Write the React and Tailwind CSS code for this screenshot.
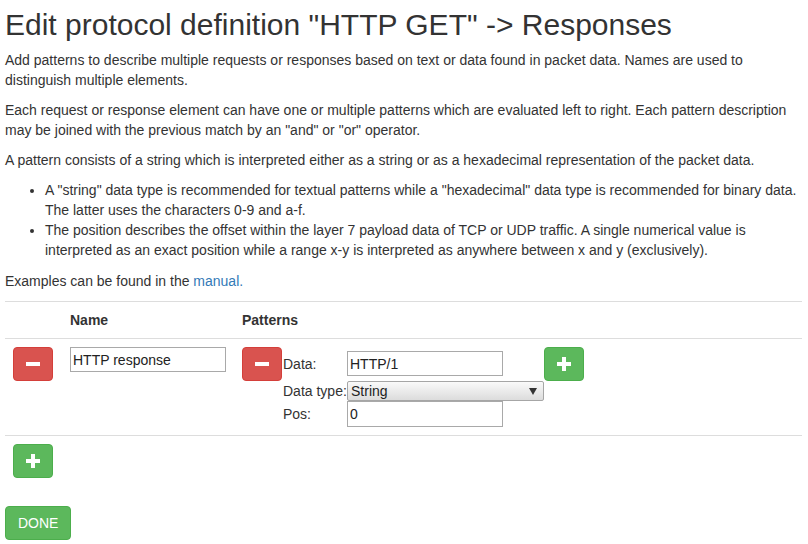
import { useState } from 'react';

function IconBtn({ kind }) {
  const red = kind === 'minus';
  return (
    <button
      type="button"
      className={
        red
          ? 'flex h-[34px] w-[40px] shrink-0 items-center justify-center rounded-[4px] border border-[#d43f3a] bg-[#d9534f]'
          : 'flex h-[34px] w-[40px] shrink-0 items-center justify-center rounded-[4px] border border-[#4cae4c] bg-[#5cb85c]'
      }
    >
      <svg width="14" height="14" viewBox="0 0 14 14">
        <rect x="0" y="5" width="14" height="4" fill="#fff" />
        {!red && <rect x="5" y="0" width="4" height="14" fill="#fff" />}
      </svg>
    </button>
  );
}

function PatternEditor() {
  const [data, setData] = useState('HTTP/1');
  const [pos, setPos] = useState('0');
  return (
    <div className="flex items-start">
      <IconBtn kind="minus" />
      <div className="ml-[1px] grid grid-cols-[64px_auto] items-center whitespace-nowrap pt-[4px]">
        <span>Data:</span>
        <input
          value={data}
          onChange={(e) => setData(e.target.value)}
          className="h-[25px] w-[156px] border border-[#a9a9a9] px-[2px] text-[#222] outline-none"
        />
        <span className="mt-[5px]">Data type:</span>
        <div className="relative mt-[5px] flex h-[20px] w-[197px] items-center rounded-[2px] border border-[#a6a6a6] bg-gradient-to-b from-[#fafafa] to-[#dcdcdc] pl-[3px] text-[#222]">
          String
          <svg className="absolute right-[6px] top-[6px]" width="8" height="7" viewBox="0 0 8 7">
            <path d="M0 0H8L4 7Z" fill="#333" />
          </svg>
        </div>
        <span>Pos:</span>
        <input
          value={pos}
          onChange={(e) => setPos(e.target.value)}
          className="h-[26px] w-[156px] border border-[#a9a9a9] px-[2px] text-[#222] outline-none"
        />
      </div>
      <IconBtn kind="plus" />
    </div>
  );
}

export default function App() {
  const [name, setName] = useState('HTTP response');
  return (
    <div
      className="min-h-[544px] bg-white pl-[5px] pr-[6px] pt-[8px] text-[14px] leading-[20px] text-[#333]"
      style={{ fontFamily: '"Liberation Sans", Arial, sans-serif' }}
    >
      <h1 className="mb-[9px] text-[30px] leading-[33px] font-normal">
        Edit protocol definition "HTTP GET" -&gt; Responses
      </h1>
      <p className="mb-[10px]">
        Add patterns to describe multiple requests or responses based on text or data found in packet data. Names are used to
        distinguish multiple elements.
      </p>
      <p className="mb-[10px]">
        Each request or response element can have one or multiple patterns which are evaluated left to right. Each pattern description
        may be joined with the previous match by an "and" or "or" operator.
      </p>
      <p className="mb-[10px]">
        A pattern consists of a string which is interpreted either as a string or as a hexadecimal representation of the packet data.
      </p>
      <ul className="mb-[11px] list-disc pl-[40px]">
        <li>
          A "string" data type is recommended for textual patterns while a "hexadecimal" data type is recommended for binary data.
          The latter uses the characters 0-9 and a-f.
        </li>
        <li>
          The position describes the offset within the layer 7 payload data of TCP or UDP traffic. A single numerical value is
          interpreted as an exact position while a range x-y is interpreted as anywhere between x and y (exclusively).
        </li>
      </ul>
      <p className="mb-[10px]">
        Examples can be found in the <a className="text-[#337ab7]">manual.</a>
      </p>

      <div className="border-t border-[#ddd]">
        <div className="flex border-b border-[#ddd] font-bold">
          <div className="w-[57px] p-[8px]"></div>
          <div className="w-[172px] p-[8px]">Name</div>
          <div className="p-[8px]">Patterns</div>
        </div>
        <div className="flex border-b border-[#ddd]">
          <div className="w-[57px] p-[8px]">
            <IconBtn kind="minus" />
          </div>
          <div className="w-[172px] p-[8px]">
            <input
              value={name}
              onChange={(e) => setName(e.target.value)}
              className="h-[25px] w-[156px] border border-[#a9a9a9] px-[2px] text-[#222] outline-none"
            />
          </div>
          <div className="p-[8px]">
            <PatternEditor />
          </div>
        </div>
        <div className="flex">
          <div className="w-[57px] p-[8px]">
            <IconBtn kind="plus" />
          </div>
        </div>
      </div>

      <button
        type="button"
        className="mt-[20px] h-[34px] rounded-[4px] border border-[#4cae4c] bg-[#5cb85c] px-[12px] text-white"
      >
        DONE
      </button>
    </div>
  );
}
